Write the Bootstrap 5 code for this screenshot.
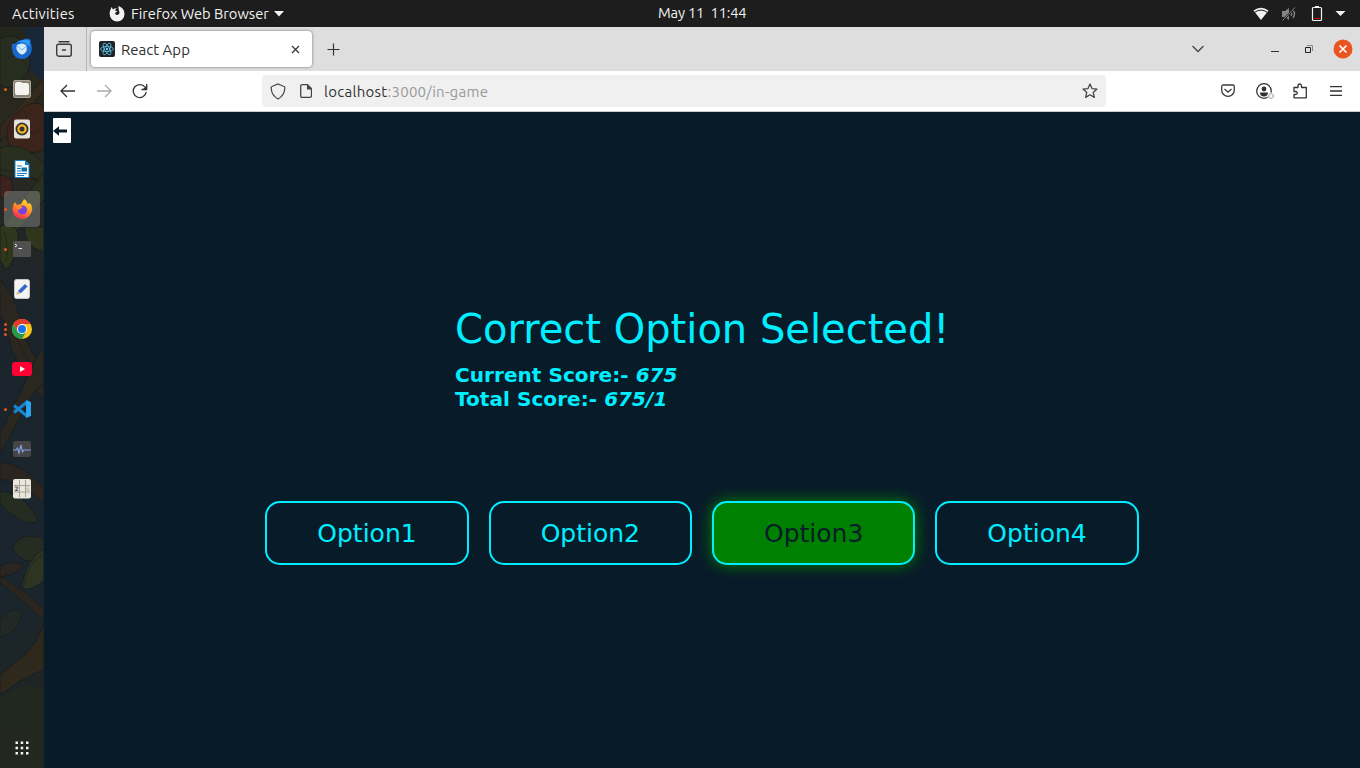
<!DOCTYPE html>
<html lang="en">
<head>
<meta charset="utf-8">
<meta name="viewport" content="width=device-width, initial-scale=1">
<title>React App</title>
<link href="https://cdn.jsdelivr.net/npm/bootstrap@5.3.0/dist/css/bootstrap.min.css" rel="stylesheet">
<style>
  body{font-family:Ubuntu,"Noto Sans","Open Sans",sans-serif;font-size:14.67px;line-height:20px;background:#081b29;overflow:hidden}
  svg{display:block;flex:none}
  .topbar{height:27px;background:#1d1d1d;color:#f2f2f2}
  .ui-text{white-space:pre;display:block}
  .activities{margin-left:12px;width:97px;letter-spacing:.25px}
  .app-name{margin-left:6px;width:138px}
  .clock{left:658px;top:3px;letter-spacing:-.17px}
  .dock{width:44px;background:#1c2229}
  .dock-art{position:absolute;inset:0}
  .dock-item{height:40px;width:44px}
  .dock-item.active::before{content:"";position:absolute;inset:2px 4px;border-radius:4px;background:rgba(255,255,255,.22)}
  .dock-item svg{position:relative}
  .dots{position:absolute;left:4px;top:0;height:40px;gap:2px}
  .dots i{width:3px;height:3px;border-radius:50%;background:#e95420}
  .tabstrip{height:44px;background:#dedede;color:#2f2f2f}
  .tabview{width:43px;border-right:1px solid #b5b5b5}
  .browser-tab{width:221px;height:36px;background:#fff;border-radius:4px;box-shadow:0 0 3px rgba(0,0,0,.5);margin-left:4px}
  .tab-title{margin-left:6px;padding-top:2px;font-size:15px}
  .toolbar{height:41px;background:#fff;border-bottom:1px solid #ccc}
  .urlbar{width:844px;height:32px;background:#f0f0f0;border-radius:4px;margin-left:114px}
  .url-text{font-size:15px;letter-spacing:.27px;color:#999;margin-left:12px;padding-top:2px}
  .url-text b{font-weight:400;color:#333}
  .page{background:#081b29;color:#00eeff;font-family:"DejaVu Sans",sans-serif}
  .back-btn{width:18px;height:25px;background:#fff;margin:6px 0 0 9px;border-radius:1px}
  .result{width:494px;margin:161.6px auto 0}
  .result h1{font-size:40px;line-height:48px;font-weight:400;white-space:nowrap;margin-bottom:10px}
  .result h5{font-size:20px;line-height:24px;font-weight:700;margin:0;letter-spacing:.06px}
  .options{gap:20px;margin-top:90px}
  .opt{border:2px solid #00eeff;border-radius:15px;padding:16px 50px 14px;font-size:25px;line-height:30px;color:#00eeff;background:transparent;font-family:"DejaVu Sans",sans-serif}
  .opt.correct{background:#008000;color:#081b29;box-shadow:0 0 15px #008000}
</style>
</head>
<body class="vh-100 d-flex flex-column">
<header class="topbar d-flex align-items-center position-relative flex-shrink-0">
  <span class="ui-text activities">Activities</span>
  <svg width="16" height="16" viewBox="0 0 16 16"><path d="M1 5 2.500 1 4 3.400Q5.500 2 8 2.300 6 3.200 6.200 4.700L8.400 5 6 7.200q.5 2.300 3 1.600 2.500-1.200.8-4.600L9.300 0Q15.500 2 15.500 8A7.400 7.400 0 0 1 .7 8.300Q.6 6 1 5z" fill="#f2f2f2"/></svg>
  <span class="ui-text app-name">Firefox Web Browser</span>
  <svg style="margin-left:5px" width="10" height="6"><path d="M0 0h10L5 5.500z" fill="#f2f2f2"/></svg>
  <span class="ui-text clock position-absolute">May 11  11:44</span>
  <div class="d-flex align-items-center ms-auto" style="margin-right:14px">
    <svg width="16" height="14" viewBox="0 0 16 14"><path d="M.5 3.500Q8-2 15.500 3.500L8 13z" fill="#f2f2f2"/><path d="M2 5.100Q8 1 14 5.100" fill="none" stroke="#1d1d1d" stroke-width="1"/></svg>
    <svg style="margin-left:12px" width="16" height="16" viewBox="0 0 16 16"><path d="M1 5h3l4-3v12l-4-3H1z" fill="#858585"/><path d="M10 6q1.500 2 0 4M12 4q3 4 0 8" fill="none" stroke="#858585" stroke-width="1.400"/><path d="M1 15 14 2" stroke="#1d1d1d" stroke-width="2"/><path d="M1.500 14.500 14 1.500" stroke="#858585"/></svg>
    <svg style="margin-left:14px" width="12" height="16" viewBox="0 0 12 16"><path d="M4 0h4v2H4z" fill="#f2f2f2"/><rect x="1.500" y="1.500" width="9" height="13" rx="1" fill="none" stroke="#f2f2f2" stroke-width="1.200"/><path d="M3 12.500h6" stroke="#c00" stroke-width="1"/></svg>
    <svg style="margin-left:12px" width="11" height="6"><path d="M.5 0h10L5.500 5z" fill="#f2f2f2"/></svg>
  </div>
</header>
<div class="d-flex flex-grow-1" style="min-height:0">
  <aside class="dock position-relative d-flex flex-column flex-shrink-0 overflow-hidden" style="padding-top:2px">
    <svg class="dock-art" width="44" height="741" viewBox="0 27 44 741">
      <defs><linearGradient id="fade" x2="0" y2="1"><stop offset="0" stop-color="#23261d"/><stop offset=".15" stop-color="#2b2920"/><stop offset=".4" stop-color="#1b242c"/><stop offset=".75" stop-color="#1a252e"/><stop offset="1" stop-color="#20251f"/></linearGradient></defs>
      <path d="M0 27h44v741H0z" fill="url(#fade)"/>
      <path d="M25 27h19v55L30 70z" fill="#182638"/>
      <g stroke="#181c1e" stroke-width="1" opacity=".75">
        <path d="M0 38q20-7 24 8 12 16 0 32Q12 92 0 85z" fill="#293120"/>
        <path d="M0 127 44 78v13L0 142z" fill="#382b1b"/>
        <path d="M18 112q14-14 26-6v44q-14 6-24-2-15 0-13-14 0-15 11-22z" fill="#432319"/>
        <path d="M0 148q22-8 44 16v20Q18 166 0 186z" fill="#2a321d"/>
        <path d="M0 175q12 0 13 12-2 12-13 12z" fill="#43211b"/>
        <path d="M0 230 44 172v28L6 244z" fill="#2b3420"/>
        <path d="M0 226q20-4 18 14-2 20-12 30L0 260zM24 227h20v25q-20-5-20-25z" fill="#343c18"/>
        <path d="M0 278q20 26 26 62 12 22 18 34v25Q24 380 12 350 4 320 0 315z" fill="#30271c"/>
        <path d="M44 348q-10 10-12 20L0 434v20l34-62 10-8z" fill="#30281c"/>
        <path d="M0 462q24 2 44 26v16Q20 482 0 479z" fill="#31251b"/>
        <path d="M0 491q26 2 38 30-14 8-38-18zM12 548q10-18 32-9v18q-18 12-32-9z" fill="#29301e"/>
        <path d="M44 548q-18 12-22 37 3 10 22-4z" fill="#343a1e"/>
        <path d="M0 566q14-6 24-1-4 9-24 12zM0 576q22 12 44 33v12Q20 598 0 583z" fill="#30271b"/>
        <path d="M0 619q16-16 22-4-4 18-22 22z" fill="#232b23"/>
        <path d="M44 620q-5 24-22 37L0 675v20l20-14 24-12z" fill="#352a19"/>
        <path d="M0 700q22-22 44-10v78H0z" fill="#232a1e" stroke="none"/>
      </g>
      <g fill="none" stroke="#14191a" opacity=".5"><path d="M5 60Q20 50 26 65M23 110q8 9 0 20 10 7 18-2M0 170Q20 170 40 182M4 232q5 12 2 30M14 330q8 24 22 42M24 585q4-22 18-30"/></g>
    </svg>
    <div class="dock-item position-relative d-flex align-items-center justify-content-center">
      <svg width="22" height="22" viewBox="0 0 22 22"><path d="M1 6q2 0 4-1Q7 2 11 2q5-3 9 0-1 2 .5 5 1 5-1 9-3 5-9 5Q2 20 1.500 13 .5 10 1 6z" fill="#1767cf"/><path d="M7 4q7-4 12-1-1 3 1 8-2-4-6-6-3-1-7-1z" fill="#2e9bf6"/><path d="M6 7q5-3 9 0 2 5-1 8-3 3-6 0-4-4-2-8z" fill="#d6ebfb"/><path d="m6 8 5 4 4.500-4" fill="none" stroke="#78b6ee"/></svg>
    </div>
    <div class="dock-item position-relative d-flex align-items-center justify-content-center">
      <div class="dots d-flex flex-column justify-content-center"><i></i></div>
      <svg width="20" height="20" viewBox="0 0 20 20"><rect x="1.500" y="1.500" width="17" height="17" rx="1.500" fill="#888274" stroke="#aaa391"/><path d="M3 5q0-2 2-2h4l1 1h5q2 0 2 2v8q0 2-2 2H5q-2 0-2-2z" fill="#f5f3ef"/></svg>
    </div>
    <div class="dock-item position-relative d-flex align-items-center justify-content-center">
      <svg width="16" height="20" viewBox="0 0 16 20"><rect y=".5" width="16" height="19" rx="2" fill="#e4e1dc"/><circle cx="8" cy="10" r="6.500" fill="#333"/><circle cx="8" cy="10" r="3.600" fill="none" stroke="#f4b81c" stroke-width="2.200"/></svg>
    </div>
    <div class="dock-item position-relative d-flex align-items-center justify-content-center">
      <svg width="16" height="18" viewBox="0 0 16 18"><path d="M1 .5h10l4 4v13H1z" fill="#f8fbfd" stroke="#1682c3"/><path d="M11 0v5h5z" fill="#1682c3"/><path d="M3 6h5M3 8.500h4M3 11h4M3 13.500h10M3 15.500h7" stroke="#1682c3" stroke-width="1.200"/><path d="M7.500 7.500H13v4H7.500z" fill="#156ca3"/></svg>
    </div>
    <div class="dock-item active position-relative d-flex align-items-center justify-content-center">
      <div class="dots d-flex flex-column justify-content-center"><i></i></div>
      <svg width="20" height="20" viewBox="0 0 20 20"><defs><linearGradient id="flame" x1=".8" y1="0" x2=".3" y2="1"><stop stop-color="#ffec3d"/><stop offset=".45" stop-color="#ff9520"/><stop offset="1" stop-color="#ff2459"/></linearGradient></defs><path d="M3 3 5 6 9 5Q11 2 12 0q3 2 4 5l2-1q3 4 1.500 9Q17 20 10 20 1 19 .5 10 .5 6 3 3z" fill="url(#flame)"/><circle cx="10.500" cy="11" r="4.500" fill="#7642dd"/><path d="M5 6q4 0 6 3-3 0-4 2-2-1-2-5z" fill="#ff8c22"/></svg>
    </div>
    <div class="dock-item position-relative d-flex align-items-center justify-content-center">
      <div class="dots d-flex flex-column justify-content-center"><i></i></div>
      <svg width="18" height="16" viewBox="0 0 18 16"><rect width="18" height="16" rx="1.500" fill="#505050"/><path d="m2 3 2 1.500L2 6M5.500 7.500H9" fill="none" stroke="#eee"/></svg>
    </div>
    <div class="dock-item position-relative d-flex align-items-center justify-content-center">
      <svg width="16" height="20" viewBox="0 0 16 20"><rect x=".5" y=".5" width="15" height="19" rx="2" fill="#f4f3f2" stroke="#c8c7c5"/><path d="m4.500 12 6.500-6.500 2 2L6.500 14z" fill="#2e62d0" stroke="#2e62d0"/><path d="m2 15.500 1.500-3L6 15z" fill="#d9b067"/></svg>
    </div>
    <div class="dock-item position-relative d-flex align-items-center justify-content-center">
      <div class="dots d-flex flex-column justify-content-center"><i></i><i></i><i></i></div>
      <svg width="20" height="20" viewBox="0 0 20 20"><circle cx="10" cy="10" r="10" fill="#fbc31a"/><path d="M10 0A10 10 0 0 0 1.340 5L5.700 12.500 10 10V5h8.660A10 10 0 0 0 10 0z" fill="#e33b2e"/><path d="M1.340 5A10 10 0 0 0 10 20l4.330-7.500L10 10l-4.330 2.500z" fill="#269a48"/><circle cx="10" cy="10" r="5" fill="#fff"/><circle cx="10" cy="10" r="4" fill="#1a73e8"/></svg>
    </div>
    <div class="dock-item position-relative d-flex align-items-center justify-content-center">
      <svg width="20" height="14" viewBox="0 0 20 14"><rect width="20" height="14" rx="3" fill="#ff0033"/><path d="m8 4 5 3-5 3z" fill="#fff"/></svg>
    </div>
    <div class="dock-item position-relative d-flex align-items-center justify-content-center">
      <div class="dots d-flex flex-column justify-content-center"><i></i></div>
      <svg width="18" height="18" viewBox="0 0 18 18"><path d="m1 5.500 13 10.500M1 12.500 14 2" stroke="#1585d3" stroke-width="3"/><path d="m13 0 5 2v14l-5 2z" fill="#27a3ef"/></svg>
    </div>
    <div class="dock-item position-relative d-flex align-items-center justify-content-center">
      <svg width="18" height="16" viewBox="0 0 18 16"><rect width="18" height="16" rx="2" fill="#454545"/><path d="M0 9h3l1.500-2 1.500 5 2-8 1.500 7 1.200-2H18" fill="none" stroke="#7d9ee0" stroke-width="1.200"/></svg>
    </div>
    <div class="dock-item position-relative d-flex align-items-center justify-content-center">
      <svg width="18" height="20" viewBox="0 0 18 20"><rect width="18" height="19.500" rx="2" fill="#e9e6df"/><path d="M6.500 1v17M12.500 1v17M1 6.500h16M1 13h16" stroke="#aaa08f"/><text x="1.500" y="12" font-family="DejaVu Sans" font-size="6" font-weight="700" fill="#3c4852">2</text><text x="13" y="12" font-family="DejaVu Sans" font-size="6" fill="#aaa">6</text></svg>
    </div>
    <div class="dock-item position-relative d-flex align-items-center justify-content-center mt-auto">
      <svg width="14" height="14" viewBox="0 0 14 14" fill="#f4f4f4"><path d="M.5.500H3V3H.500zM5.700.500h2.500V3H5.700zM11 .500h2.500V3H11zM.5 5.700H3v2.500H.500zM5.700 5.700h2.500v2.500H5.700zM11 5.700h2.500v2.500H11zM.5 11H3v2.500H.500zM5.700 11h2.500v2.500H5.700zM11 11h2.500v2.500H11z"/></svg>
    </div>
  </aside>
  <div class="flex-grow-1 d-flex flex-column">
    <div class="tabstrip d-flex align-items-center flex-shrink-0">
      <div class="tabview h-100 d-flex align-items-center" style="padding-left:12px">
        <svg width="16" height="16" viewBox="0 0 16 16" fill="none" stroke="#3b3b3b" stroke-width="1.400"><path d="M2.500.700h11M6 9h4"/><rect x=".7" y="3.200" width="14.600" height="12" rx="2"/></svg>
      </div>
      <div class="browser-tab d-flex align-items-center">
        <svg style="margin-left:8px" width="16" height="16" viewBox="0 0 16 16"><rect width="16" height="16" rx="2" fill="#20232a"/><g fill="none" stroke="#61dafb" stroke-width=".7"><ellipse cx="8" cy="8" rx="6.500" ry="2.500"/><ellipse cx="8" cy="8" rx="6.500" ry="2.500" transform="rotate(60 8 8)"/><ellipse cx="8" cy="8" rx="6.500" ry="2.500" transform="rotate(120 8 8)"/></g><circle cx="8" cy="8" r="1.200" fill="#61dafb"/></svg>
        <span class="ui-text tab-title">React App</span>
        <svg class="ms-auto" style="margin-right:12px" width="9" height="9"><path d="m1 1 7 7M8 1 1 8" stroke="#333" stroke-width="1.200"/></svg>
      </div>
      <svg style="margin:1px 0 0 15px" width="13" height="13"><path d="M6.500.500v12M.5 6.500h12" stroke="#333" stroke-width="1.200"/></svg>
      <svg class="ms-auto" width="14" height="8"><path d="m1.500 1 5.500 5.500L12.500 1" fill="none" stroke="#444" stroke-width="1.300"/></svg>
      <svg style="margin:5px 0 0 66px" width="8" height="1"><path d="M0 .500h8" stroke="#333"/></svg>
      <svg style="margin-left:26px" width="8" height="8"><path d="M2 .500h5.500V6" fill="none" stroke="#888"/><path d="M.5 2.500h5v5h-5z" fill="none" stroke="#222"/></svg>
      <svg style="margin:0 7px 0 20px" width="20" height="20"><circle cx="10" cy="10" r="9.500" fill="#e95420"/><path d="m6.500 6.500 7 7M13.500 6.500l-7 7" stroke="#fff" stroke-width="1.600"/></svg>
    </div>
    <div class="toolbar d-flex align-items-center flex-shrink-0">
      <svg style="margin-left:16px" width="16" height="14" viewBox="0 0 16 14"><path d="M15 7H1.500M7 1 1 7l6 6" fill="none" stroke="#333" stroke-width="1.300"/></svg>
      <svg style="margin-left:20px" width="16" height="14" viewBox="0 0 16 14"><path d="M1 7h13.500M9 1l6 6-6 6" fill="none" stroke="#aaa" stroke-width="1.300"/></svg>
      <svg style="margin-left:20px" width="16" height="16" viewBox="0 0 16 16"><path d="M14.200 9A6.500 6.500 0 1 1 13 4.200M14.700 1v5.500H9.500" fill="none" stroke="#333" stroke-width="1.300"/><path d="m14.700 2.500v4h-4z" fill="#333"/></svg>
      <div class="urlbar d-flex align-items-center">
        <svg style="margin-left:8px" width="16" height="17" viewBox="0 0 16 17"><path d="M8 1 14 3.500q1 0 .8 2-.5 7-6.800 10.500Q1.700 12.500 1.200 5.500 1 3.500 2 3.500z" fill="none" stroke="#444" stroke-width="1.200"/></svg>
        <svg style="margin-left:14px" width="12" height="14" viewBox="0 0 12 14"><path d="M2.500.700h5l4 4v7.100q0 1.500-1.500 1.500H2.200Q.7 13.300.7 11.800V2.200Q.7.700 2.500.700z" fill="none" stroke="#444" stroke-width="1.300"/><path d="M7 .500v5h5z" fill="#444"/></svg>
        <span class="ui-text url-text"><b>localhost</b>:3000/in-game</span>
        <svg class="ms-auto" style="margin-right:8px" width="16" height="16" viewBox="0 0 16 16"><path d="m8 1 2 4.600 5 .5-3.800 3.300 1.200 5L8 11.800 3.600 14.400l1.200-5L1 6.100l5-.5z" fill="none" stroke="#444" stroke-width="1.300" stroke-linejoin="round"/></svg>
      </div>
      <svg class="ms-auto" width="14" height="14" viewBox="0 0 14 14"><path d="M2.200 1h9.600q1.500 0 1.500 1.500V6A6.300 6.300 0 0 1 .7 6V2.500Q.7 1 2.200 1zM3.500 5 7 8.200 10.500 5" fill="none" stroke="#3b3b3b" stroke-width="1.300"/></svg>
      <svg style="margin-left:21px" width="19" height="17" viewBox="0 0 19 17"><circle cx="8" cy="8" r="7.300" fill="none" stroke="#333" stroke-width="1.300"/><circle cx="8" cy="6" r="2.400" fill="#333"/><path d="M4 9.500h8q0 4-4 4t-4-4z" fill="#333"/><circle cx="15" cy="13" r="3.500" fill="#fff"/><circle cx="15" cy="13" r="2.300" fill="none" stroke="#999"/></svg>
      <svg style="margin-left:18px" width="15" height="16" viewBox="0 0 15 16"><path d="M1 4.500h4V3q0-2 1.700-2T8.500 3v1.500h4.800v10.300H1V11.500h1.500q1.800 0 1.800-1.500T2.500 8.500H1z" fill="none" stroke="#333" stroke-width="1.300" stroke-linejoin="round"/></svg>
      <svg style="margin:0 18px 0 22px" width="12" height="10"><path d="M0 .700h12M0 5h12M0 9.300h12" stroke="#333" stroke-width="1.300"/></svg>
    </div>
    <main class="page flex-grow-1">
      <div class="back-btn d-flex align-items-center"><svg width="15" height="10" viewBox="0 0 15 10"><path d="M0 5 6 .200V3.500h8v3H6v3.300z" fill="#081b29"/></svg></div>
      <div class="result">
        <h1>Correct Option Selected!</h1>
        <h5>Current Score:- <i>675</i></h5>
        <h5>Total Score:- <i>675/1</i></h5>
      </div>
      <div class="options d-flex justify-content-center">
        <button class="opt">Option1</button>
        <button class="opt">Option2</button>
        <button class="opt correct">Option3</button>
        <button class="opt">Option4</button>
      </div>
    </main>
  </div>
</div>
<script src="https://cdn.jsdelivr.net/npm/bootstrap@5.3.0/dist/js/bootstrap.bundle.min.js"></script>
</body>
</html>
